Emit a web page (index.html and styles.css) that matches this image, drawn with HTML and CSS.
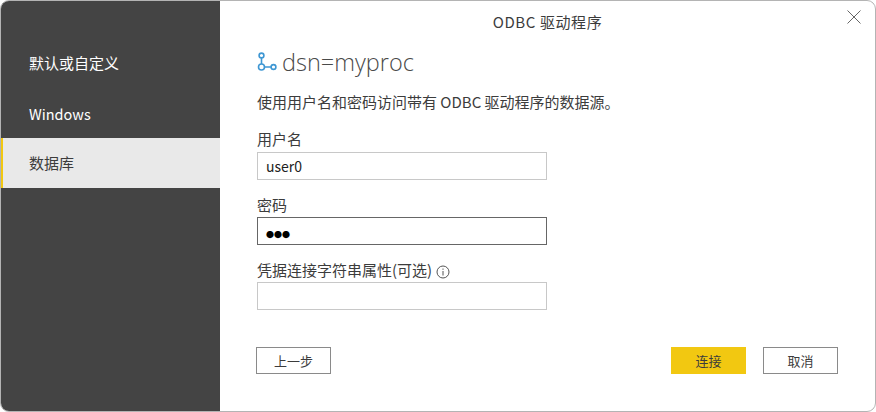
FILE: index.html
```html
<!DOCTYPE html>
<html lang="zh-CN">
<head>
  <meta charset="UTF-8" />
  <title>ODBC 驱动程序</title>
  <link rel="stylesheet" href="styles.css">
</head>
<body>
  <div class="dialog">
    <nav class="sidebar">
      <div class="nav-item">默认或自定义</div>
      <div class="nav-item">Windows</div>
      <div class="nav-item active">数据库</div>
    </nav>
    <main class="content">
      <header class="title-bar">
        <span class="title">ODBC 驱动程序</span>
        <svg class="close" width="14" height="14" viewBox="0 0 14 14">
          <path d="M0.5 0.5L13.5 13.5M13.5 0.5L0.5 13.5" stroke="#666" stroke-width="1" fill="none" />
        </svg>
      </header>
      <div class="form">
        <h1 class="source">
          <svg class="source-icon" width="20" height="20" viewBox="0 0 20 20" fill="none" stroke="#3f97d3" stroke-width="1.6">
            <circle cx="4.5" cy="3.5" r="2.4" />
            <circle cx="4.5" cy="15" r="3" />
            <circle cx="16.5" cy="15" r="2.4" />
            <path d="M4.5 6V12M7.5 15H14" />
          </svg>
          dsn=myproc
        </h1>
        <p class="desc">使用用户名和密码访问带有 ODBC 驱动程序的数据源。</p>
        <label class="field-label user-label">用户名</label>
        <div class="input">user0</div>
        <label class="field-label password-label">密码</label>
        <div class="input focused"><span class="dots">●●●</span></div>
        <label class="field-label options-label">凭据连接字符串属性(可选)
          <svg class="info" width="14" height="14" viewBox="0 0 14 14" fill="none" stroke="#555">
            <circle cx="7" cy="7" r="6" />
            <path d="M7 6V10.5M7 3.5V4.8" />
          </svg>
        </label>
        <div class="input"></div>
      </div>
      <footer class="actions">
        <button class="btn">上一步</button>
        <div class="actions-right">
          <button class="btn primary">连接</button>
          <button class="btn">取消</button>
        </div>
      </footer>
    </main>
  </div>
</body>
</html>
```

FILE: styles.css
```css
* {
  box-sizing: border-box;
}
html, body {
  margin: 0;
  height: 100%;
  background: #fff;
}
body {
  font-family: "Noto Sans CJK SC", "Noto Sans", sans-serif;
  color: #3c3c3c;
  overflow: hidden;
}
.dialog {
  display: flex;
  width: 876px;
  height: 412px;
  border: 1px solid #b4b4b4;
  border-radius: 9px;
  overflow: hidden;
  background: #fff;
}
.sidebar {
  width: 219px;
  flex: none;
  background: #444;
  padding-top: 36px;
  color: #fff;
  font-size: 15px;
}
.nav-item {
  height: 50px;
  line-height: 52px;
  padding-left: 28px;
}
.nav-item:nth-child(2) {
  height: 51px;
  line-height: 54px;
  font-size: 14.5px;
}
.nav-item.active {
  line-height: 50px;
  background: #e9e9e9;
  color: #3c3c3c;
  border-left: 2px solid #f2c811;
  padding-left: 26px;
}
.content {
  flex: 1;
  display: flex;
  flex-direction: column;
}
.title-bar {
  height: 40px;
  display: flex;
  align-items: center;
  justify-content: center;
  position: relative;
}
.title {
  font-size: 15px;
  letter-spacing: 0.6px;
}
.close {
  position: absolute;
  top: 9px;
  right: 14px;
}
.form {
  padding: 0 0 0 37px;
  flex: 1;
}
.source {
  display: flex;
  align-items: center;
  gap: 5px;
  margin: 3px 0 0;
  height: 36px;
  font-family: "Open Sans", sans-serif;
  font-weight: 300;
  font-size: 23.5px;
  color: #4a4a4a;
}
.desc {
  margin: 12px 0 0;
  font-size: 15px;
  line-height: 20px;
}
.field-label {
  display: block;
  margin-top: 17px;
  font-size: 15px;
  line-height: 20px;
  height: 22px;
}
.user-label {
  height: 23px;
}
.password-label {
  margin-top: 15px;
}
.options-label {
  margin-top: 15px;
}
.info {
  vertical-align: -3px;
}
.input {
  width: 290px;
  height: 28px;
  border: 1px solid #c8c8c8;
  padding-left: 8px;
  font-size: 14px;
  line-height: 26px;
  color: #222;
}
.input.focused {
  border-color: #666;
}
.dots {
  font-size: 8px;
  color: #000;
  vertical-align: -1px;
}
.actions {
  display: flex;
  justify-content: space-between;
  padding: 0 37px 37px 36px;
}
.actions-right {
  display: flex;
  gap: 17px;
}
.btn {
  width: 75px;
  height: 27px;
  padding: 0;
  border: 1px solid #8a8a8a;
  background: #fff;
  font-family: inherit;
  font-size: 13px;
  color: #3c3c3c;
}
.btn.primary {
  border-color: #f2c811;
  background: #f2c811;
}
```
